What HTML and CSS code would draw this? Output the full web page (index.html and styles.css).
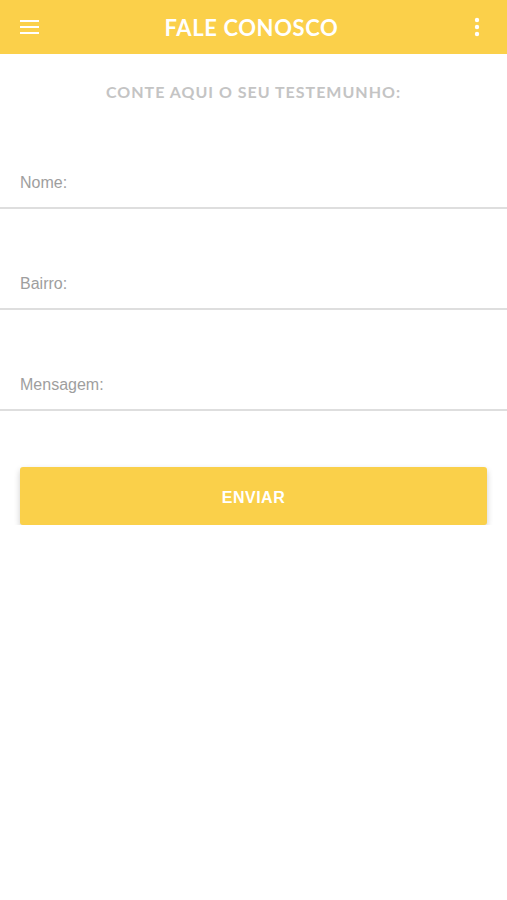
FILE: index.html
```html
<!DOCTYPE html>
<html lang="pt">
<head>
  <meta charset="UTF-8">
  <meta name="viewport" content="width=device-width, initial-scale=1.0">
  <title>Fale Conosco</title>
  <link rel="stylesheet" href="styles.css">
</head>
<body>
  <header class="toolbar">
    <button class="icon-btn menu-btn" aria-label="Menu">
      <svg width="20" height="16" viewBox="0 0 20 16">
        <rect x="0" y="1" width="19" height="2" fill="#fff"/>
        <rect x="0" y="7" width="19" height="2" fill="#fff"/>
        <rect x="0" y="13" width="19" height="2" fill="#fff"/>
      </svg>
    </button>
    <h1>FALE CONOSCO</h1>
    <button class="icon-btn more-btn" aria-label="Mais">
      <svg width="6" height="20" viewBox="0 0 6 20">
        <circle cx="3" cy="3" r="2.2" fill="#fff"/>
        <circle cx="3" cy="10" r="2.2" fill="#fff"/>
        <circle cx="3" cy="17" r="2.2" fill="#fff"/>
      </svg>
    </button>
  </header>

  <main class="content">
    <h2 class="subtitle">CONTE AQUI O SEU TESTEMUNHO:</h2>

    <form class="testimony-form">
      <div class="field">
        <input type="text" placeholder="Nome:">
      </div>
      <div class="field">
        <input type="text" placeholder="Bairro:">
      </div>
      <div class="field">
        <input type="text" placeholder="Mensagem:">
      </div>

      <div class="actions">
        <button type="submit" class="send-btn">ENVIAR</button>
      </div>
    </form>
  </main>
</body>
</html>
```

FILE: styles.css
```css
body {
  margin: 0;
  padding: 0;
  background-color: #fff;
  font-family: 'Lato', 'Liberation Sans', sans-serif;
}

.toolbar {
  height: 54px;
  background-color: #FBD04A;
  display: flex;
  align-items: center;
  justify-content: space-between;
  padding: 0 20px;
  box-sizing: border-box;
}

.toolbar h1 {
  margin: 0 0 0 -4px;
  color: #fff;
  font-size: 22px;
  font-weight: 700;
  letter-spacing: 0.6px;
}

.icon-btn {
  background: none;
  border: 0;
  padding: 0;
  display: flex;
  align-items: center;
}

.menu-btn {
  width: 20px;
}

.more-btn {
  width: 20px;
  justify-content: center;
}

.subtitle {
  margin: 28px 0 0;
  text-align: center;
  color: #c4c4c4;
  font-size: 16px;
  font-weight: 700;
  letter-spacing: 1px;
}

.testimony-form {
  margin-top: 65px;
}

.field {
  border-bottom: 2px solid #dedede;
  height: 99px;
  display: flex;
  align-items: flex-end;
}

.field:first-child {
  height: 41px;
}

.field input {
  border: 0;
  outline: none;
  width: 100%;
  padding: 0 20px 15px;
  font-family: 'Liberation Sans', Arial, sans-serif;
  font-size: 16px;
  color: #555;
  background: transparent;
}

.field input::placeholder {
  color: #9e9e9e;
}

.actions {
  padding: 56px 20px 0;
}

.send-btn {
  width: 100%;
  height: 58px;
  padding-top: 4px;
  border: 0;
  border-radius: 3px;
  background-color: #FAD04A;
  color: #fff;
  font-family: 'Liberation Sans', Arial, sans-serif;
  font-size: 16px;
  font-weight: 700;
  letter-spacing: 0.5px;
  box-shadow: 0 3px 6px rgba(0, 0, 0, 0.2);
}
```
